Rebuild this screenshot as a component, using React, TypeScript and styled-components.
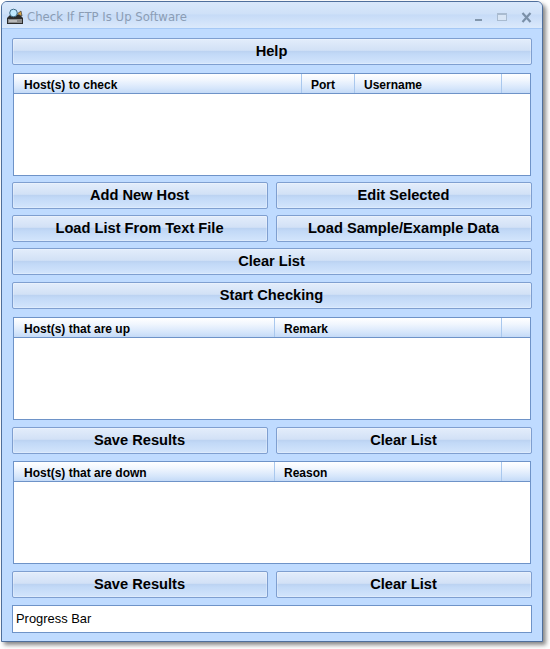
import React from 'react'
import styled, { createGlobalStyle } from 'styled-components'

const GlobalStyle = createGlobalStyle`
  html, body {
    margin: 0;
    padding: 0;
    background: #ffffff;
    height: 649px;
    overflow: hidden;
  }
`

const Win = styled.div`
  width: 542px;
  height: 641px;
  margin: 1px 0 0 1px;
  box-sizing: border-box;
  display: flex;
  flex-direction: column;
  background: #bfdbff;
  border: 1px solid #4f6f9c;
  border-radius: 6px 6px 0 0;
  box-shadow: 3px 3px 4px rgba(70, 70, 70, 0.65);
  font-family: "Liberation Sans", Arial, sans-serif;
  color: #000;
`

const TitleBar = styled.div`
  height: 27px;
  flex: none;
  display: flex;
  align-items: center;
  box-sizing: border-box;
  padding: 4px 10px 0 4px;
  border-radius: 5px 5px 0 0;
  border-bottom: 1px solid #a5c8f5;
  background: linear-gradient(#d9e8fb 0%, #cfe1f8 45%, #c6dbf7 50%, #dbe9fb 100%);
`

const Title = styled.span`
  margin-left: 3px;
  flex: 1;
  font-family: "DejaVu Sans", sans-serif;
  font-size: 11.7px;
  color: #8b9db5;
  white-space: nowrap;
`

const WinIcons = styled.div`
  display: flex;
  align-items: center;
  gap: 14px;
`

const Body = styled.div`
  flex: 1;
  display: flex;
  flex-direction: column;
  padding: 9px 10px 0 10px;
`

const Btn = styled.button<{ $mt?: number; $full?: boolean }>`
  flex: ${p => (p.$full ? 'none' : 1)};
  width: 100%;
  height: 27px;
  margin-top: ${p => p.$mt ?? 6}px;
  padding: 0 1px 2px 0;
  box-sizing: border-box;
  border: 1px solid #7f9fd0;
  border-radius: 2px;
  background: linear-gradient(#e3edfb 0%, #d2e1f6 45%, #bcd3f2 50%, #c2d9f7 60%, #d3e5fc 100%);
  box-shadow: inset 0 0 0 1px rgba(255, 255, 255, 0.25);
  font-family: "Liberation Sans", Arial, sans-serif;
  font-size: 14.65px;
  font-weight: 700;
  color: #000;
`

const BtnRow = styled.div<{ $mt?: number }>`
  display: flex;
  gap: 8px;
  margin-top: ${p => p.$mt ?? 6}px;
  & > button {
    margin-top: 0;
  }
`

const ListBox = styled.div<{ $mt: number }>`
  height: 103px;
  margin: ${p => p.$mt}px 1px 0 1px;
  box-sizing: border-box;
  border: 1px solid #6e93c8;
  background: #fff;
`

const ListHead = styled.div`
  height: 20px;
  display: flex;
  box-sizing: border-box;
  border-bottom: 1px solid #6e93c8;
  background: linear-gradient(#ffffff 0%, #f2f7fe 30%, #d6e6fb 75%, #c4daf7 100%);
`

const Col = styled.div<{ $w?: number }>`
  ${p => (p.$w ? `width: ${p.$w}px; flex: none;` : 'flex: 1;')}
  box-sizing: border-box;
  padding: 4px 0 0 9px;
  font-size: 12px;
  font-weight: 700;
  line-height: 14px;
  white-space: nowrap;
  border-right: 1px solid #a9c8ee;
  &:first-child {
    padding-left: 10px;
  }
  &:last-child {
    border-right: none;
  }
`

const ProgressBar = styled.div`
  height: 28px;
  margin-top: 7px;
  box-sizing: border-box;
  display: flex;
  align-items: center;
  padding: 0 3px 2px;
  border: 1px solid #6e93c8;
  background: #fff;
  font-size: 12.9px;
  font-weight: 400;
`

function AppIcon() {
  return (
    <svg width="18" height="18" viewBox="0 0 18 18">
      <path d="M1 10l3-3h10l3 3v6H1z" fill="#2c2c2c" />
      <rect x="2" y="11" width="14" height="4" fill="#8d8d8d" />
      <path d="M3 13h8" stroke="#e6e6e6" strokeWidth="1" />
      <path d="M11 6l4-3 1 5z" fill="#d9a441" stroke="#3d3d3d" strokeWidth="0.7" />
      <circle cx="7.5" cy="5" r="3.8" fill="#bfe8ff" stroke="#3f6b86" />
    </svg>
  )
}

function WindowButtons() {
  return (
    <WinIcons>
      <svg width="9" height="11" viewBox="0 0 9 11">
        <rect x="1" y="7" width="7" height="2" fill="#8397ad" />
      </svg>
      <svg width="10" height="11" viewBox="0 0 10 11">
        <rect x="0.5" y="1.5" width="9" height="7" fill="#d8e5f5" stroke="#a9bbd0" />
        <rect x="0" y="1" width="10" height="2" fill="#a9bbd0" />
      </svg>
      <svg width="11" height="11" viewBox="0 0 11 11">
        <path d="M1.5 1l8 9M9.5 1l-8 9" stroke="#7b90a8" strokeWidth="2.2" />
      </svg>
    </WinIcons>
  )
}

export default function App() {
  return (
    <>
      <GlobalStyle />
      <Win>
        <TitleBar>
          <AppIcon />
          <Title>Check If FTP Is Up Software</Title>
          <WindowButtons />
        </TitleBar>
        <Body>
          <Btn $mt={0} $full>Help</Btn>
          <ListBox $mt={8}>
            <ListHead>
              <Col $w={288}>Host(s) to check</Col>
              <Col $w={53}>Port</Col>
              <Col $w={147}>Username</Col>
              <Col />
            </ListHead>
          </ListBox>
          <BtnRow>
            <Btn>Add New Host</Btn>
            <Btn>Edit Selected</Btn>
          </BtnRow>
          <BtnRow>
            <Btn>Load List From Text File</Btn>
            <Btn>Load Sample/Example Data</Btn>
          </BtnRow>
          <Btn $full>Clear List</Btn>
          <Btn $mt={7} $full>Start Checking</Btn>
          <ListBox $mt={8}>
            <ListHead>
              <Col $w={261}>Host(s) that are up</Col>
              <Col $w={227}>Remark</Col>
              <Col />
            </ListHead>
          </ListBox>
          <BtnRow $mt={7}>
            <Btn>Save Results</Btn>
            <Btn>Clear List</Btn>
          </BtnRow>
          <ListBox $mt={7}>
            <ListHead>
              <Col $w={261}>Host(s) that are down</Col>
              <Col $w={227}>Reason</Col>
              <Col />
            </ListHead>
          </ListBox>
          <BtnRow $mt={7}>
            <Btn>Save Results</Btn>
            <Btn>Clear List</Btn>
          </BtnRow>
          <ProgressBar>Progress Bar</ProgressBar>
        </Body>
      </Win>
    </>
  )
}
